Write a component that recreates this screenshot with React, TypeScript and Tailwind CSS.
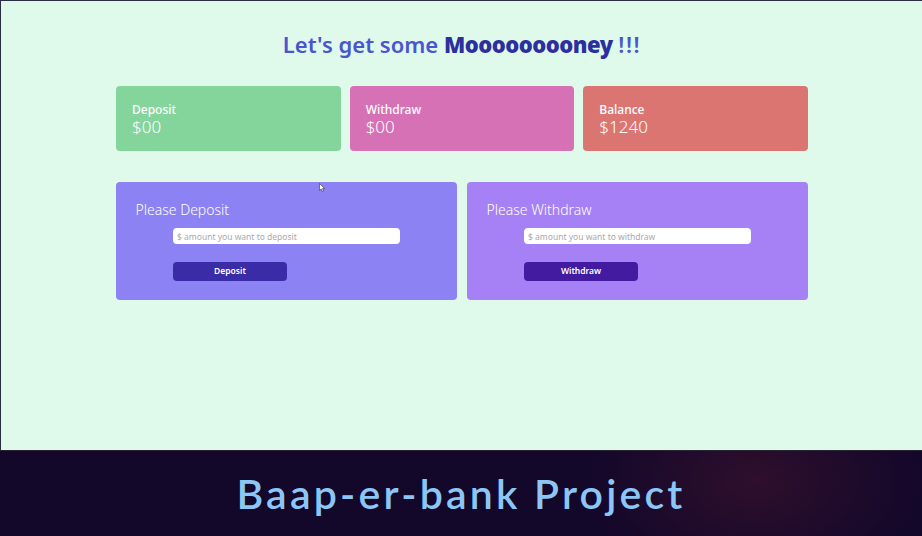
import React from 'react';

const stats = [
  { label: 'Deposit', value: '$00', color: 'bg-[#84d59c]' },
  { label: 'Withdraw', value: '$00', color: 'bg-[#d771b5]' },
  { label: 'Balance', value: '$1240', color: 'bg-[#db7572]' },
];

const forms = [
  {
    title: 'Please Deposit',
    placeholder: '$ amount you want to deposit',
    button: 'Deposit',
    panel: 'bg-[#8c82f3]',
    btn: 'bg-[#3a2ba6]',
  },
  {
    title: 'Please Withdraw',
    placeholder: '$ amount you want to withdraw',
    button: 'Withdraw',
    panel: 'bg-[#a680f5]',
    btn: 'bg-[#431ba0]',
  },
];

const App: React.FC = () => {
  return (
    <div className="w-[922px] h-[536px] overflow-hidden flex flex-col font-['Noto_Sans','Open_Sans',sans-serif]">
      {/* Page */}
      <div className="relative h-[450px] bg-[#dffaea] border-l border-t border-[#2a2f45]">
        <div className="w-[692px] ml-[115px]">
          <h1 className="pt-[28px] h-[85px] text-center text-[22px] leading-[30px] font-semibold text-[#4a55cf]">
            Let's get some <span className="font-black text-[#2e2f9e] tracking-[-0.5px]">Mooooooooney</span>{' '}
            <span className="tracking-[1.5px]">!!!</span>
          </h1>

          {/* Totals */}
          <div className="grid grid-cols-3 gap-[9px]">
            {stats.map((s) => (
              <div key={s.label} className={`h-[65px] rounded pl-4 pt-[17px] text-white ${s.color}`}>
                <div className="text-[12px] leading-[14px] font-medium">{s.label}</div>
                <div className="text-[17px] leading-[19px] font-light">{s.value}</div>
              </div>
            ))}
          </div>

          {/* Forms */}
          <div className="grid grid-cols-2 gap-[10px] mt-[31px]">
            {forms.map((f) => (
              <div key={f.title} className={`h-[118px] rounded pl-[19.5px] pt-[18px] ${f.panel}`}>
                <h2 className="text-[14px] leading-[20px] font-light text-white">{f.title}</h2>
                <div className="pl-[37.5px] pt-[8px]">
                  <input
                    type="text"
                    placeholder={f.placeholder}
                    className="block w-[227px] h-4 rounded-sm bg-white px-1 text-[8.5px] outline-none placeholder:text-[#a9a9b0]"
                  />
                  <button className={`block mt-[18px] w-[114px] h-[19px] rounded text-[8.5px] font-semibold text-white ${f.btn}`}>
                    {f.button}
                  </button>
                </div>
              </div>
            ))}
          </div>
        </div>

        {/* Mouse cursor */}
        <svg className="absolute left-[318px] top-[182px]" width="6" height="9" viewBox="0 0 6 9">
          <path d="M0.5 0.5 V7.5 L2.2 6 L3.4 8.5 L4.6 8 L3.5 5.6 H5.6 Z" fill="#ffffff" stroke="#33333a" strokeWidth="0.6" />
        </svg>
      </div>

      {/* Title banner */}
      <div className="h-[86px] flex items-center justify-center border-t border-[#2b2233] bg-[#13072a] bg-[radial-gradient(ellipse_170px_110px_at_755px_30px,#2e0f2c,#13072a)]">
        <span className="text-[41px] leading-none text-[#8cc6f7] font-['Lato',sans-serif] font-semibold tracking-[3.2px]">
          Baap-er-bank Project
        </span>
      </div>
    </div>
  );
};

export default App;
